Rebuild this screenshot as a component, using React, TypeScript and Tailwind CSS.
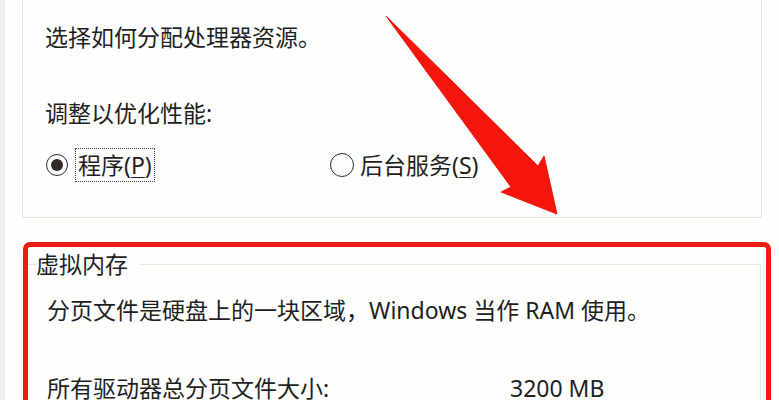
export default function App() {
  return (
    <div
      className="relative w-[779px] h-[400px] overflow-hidden bg-[#fefefd] text-[23px] text-[#1e1e1e] flex"
      style={{ fontFamily: '"Noto Sans", "Noto Sans CJK SC", sans-serif' }}
    >
      {/* window edge strip */}
      <div className="w-[5px] h-full bg-[#eeede6] shrink-0" />

      <div className="flex flex-col">
        {/* 处理器计划 group */}
        <div className="shrink-0 ml-[17px] w-[740px] h-[218px] border-x border-b border-[#e6e5df] pl-[22px] pt-[22px]">
          <p className="leading-[30px]">选择如何分配处理器资源。</p>
          <p className="leading-[30px] mt-[46px]">调整以优化性能:</p>
          <div className="flex items-center mt-[20px] h-[34px]">
            <div className="flex items-center w-[285px]">
              <span className="ml-[1px] w-[22px] h-[22px] rounded-full border-[1.5px] border-[#2b2b2b] flex items-center justify-center">
                <span className="w-[12px] h-[12px] rounded-full bg-[#2e2b28]" />
              </span>
              <span className="ml-[7px] h-[34px] border border-dotted border-[#444] px-[2px] leading-[32px]">
                程序(<span className="underline underline-offset-[3px] decoration-1">P</span>)
              </span>
            </div>
            <span className="w-[24px] h-[24px] rounded-full border-[1.5px] border-[#2b2b2b]" />
            <span className="ml-[6px] leading-[32px]">
              后台服务(<span className="underline underline-offset-[3px] decoration-1">S</span>)
            </span>
          </div>
        </div>

        {/* 虚拟内存 group, highlighted */}
        <div className="shrink-0 ml-[18px] mt-[24px] w-[748px] h-[220px] border-[5px] border-[#ec1c10] rounded-[7px]">
          <fieldset className="mt-[5px] w-[733px] h-[200px] border-t border-r border-[#e6e5df] pl-[8px]">
            <legend className="leading-[24px] pr-[12px]">虚拟内存</legend>
            <div className="pl-[11px]">
              <p className="leading-[30px] mt-[19px]">
                分页文件是硬盘上的一块区域，Windows 当作 RAM 使用。
              </p>
              <div className="flex leading-[30px] mt-[48px]">
                <span className="w-[463px]">所有驱动器总分页文件大小:</span>
                <span>3200 MB</span>
              </div>
            </div>
          </fieldset>
        </div>
      </div>

      {/* red annotation arrow */}
      <svg
        className="absolute left-0 top-0 pointer-events-none"
        width="779"
        height="400"
        viewBox="0 0 779 400"
      >
        <polygon
          points="386,16 538,166 544,156 557,214 501,192 511,187"
          fill="#f4160c"
          stroke="#f4160c"
          strokeWidth="1"
          strokeLinejoin="round"
        />
      </svg>
    </div>
  );
}
